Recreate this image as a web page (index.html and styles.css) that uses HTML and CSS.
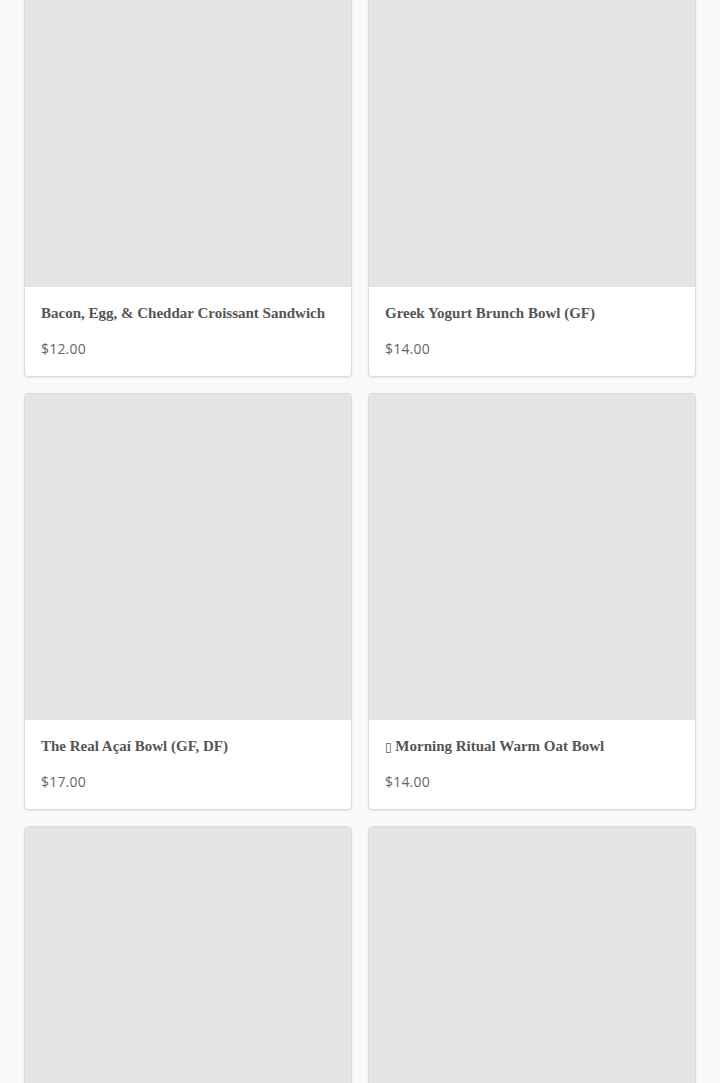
FILE: index.html
```html
<!DOCTYPE html>
<html lang="en">
<head>
  <meta charset="UTF-8">
  <meta name="viewport" content="width=device-width, initial-scale=1.0">
  <title>Menu</title>
  <link rel="stylesheet" href="styles.css">
</head>
<body>
  <div class="menu-grid">
    <div class="item-card">
      <div class="item-image"></div>
      <div class="item-info">
        <h3 class="item-name">Bacon, Egg, &amp; Cheddar Croissant Sandwich</h3>
        <p class="item-price">$12.00</p>
      </div>
    </div>
    <div class="item-card">
      <div class="item-image"></div>
      <div class="item-info">
        <h3 class="item-name">Greek Yogurt Brunch Bowl (GF)</h3>
        <p class="item-price">$14.00</p>
      </div>
    </div>
    <div class="item-card">
      <div class="item-image"></div>
      <div class="item-info">
        <h3 class="item-name">The Real Açaí Bowl (GF, DF)</h3>
        <p class="item-price">$17.00</p>
      </div>
    </div>
    <div class="item-card">
      <div class="item-image"></div>
      <div class="item-info">
        <h3 class="item-name"><span class="missing-glyph">▯</span> Morning Ritual Warm Oat Bowl</h3>
        <p class="item-price">$14.00</p>
      </div>
    </div>
    <div class="item-card">
      <div class="item-image"></div>
      <div class="item-info">
        <h3 class="item-name">Avocado Toast</h3>
        <p class="item-price">$13.00</p>
      </div>
    </div>
    <div class="item-card">
      <div class="item-image"></div>
      <div class="item-info">
        <h3 class="item-name">Breakfast Burrito</h3>
        <p class="item-price">$15.00</p>
      </div>
    </div>
  </div>
</body>
</html>
```

FILE: styles.css
```css
body {
  margin: 0;
  background-color: #fafafa;
  font-family: "Open Sans", "Liberation Sans", Arial, sans-serif;
  color: #666;
}
.menu-grid {
  display: grid;
  grid-template-columns: 1fr 1fr;
  gap: 16px;
  padding: 0 24px;
  margin-top: -40px;
}
.item-card {
  background-color: #fff;
  border: 1px solid #dcdcdc;
  border-radius: 4px;
  box-shadow: 0 1px 2px rgba(0, 0, 0, 0.08);
  overflow: hidden;
}
.item-image {
  height: 326px;
  background-color: #e4e4e4;
}
.item-info {
  padding: 16px 16px 17px;
}
.item-name {
  margin: 0;
  font-family: "Liberation Serif", "Times New Roman", serif;
  font-weight: bold;
  font-size: 15px;
  line-height: 20px;
  color: #555;
}
.missing-glyph {
  font-family: "DejaVu Sans", sans-serif;
  font-weight: normal;
  font-size: 12px;
  line-height: 0;
}
.item-price {
  margin: 16px 0 0;
  font-size: 14px;
  line-height: 20px;
  letter-spacing: 0.2px;
  color: #666;
}
```
